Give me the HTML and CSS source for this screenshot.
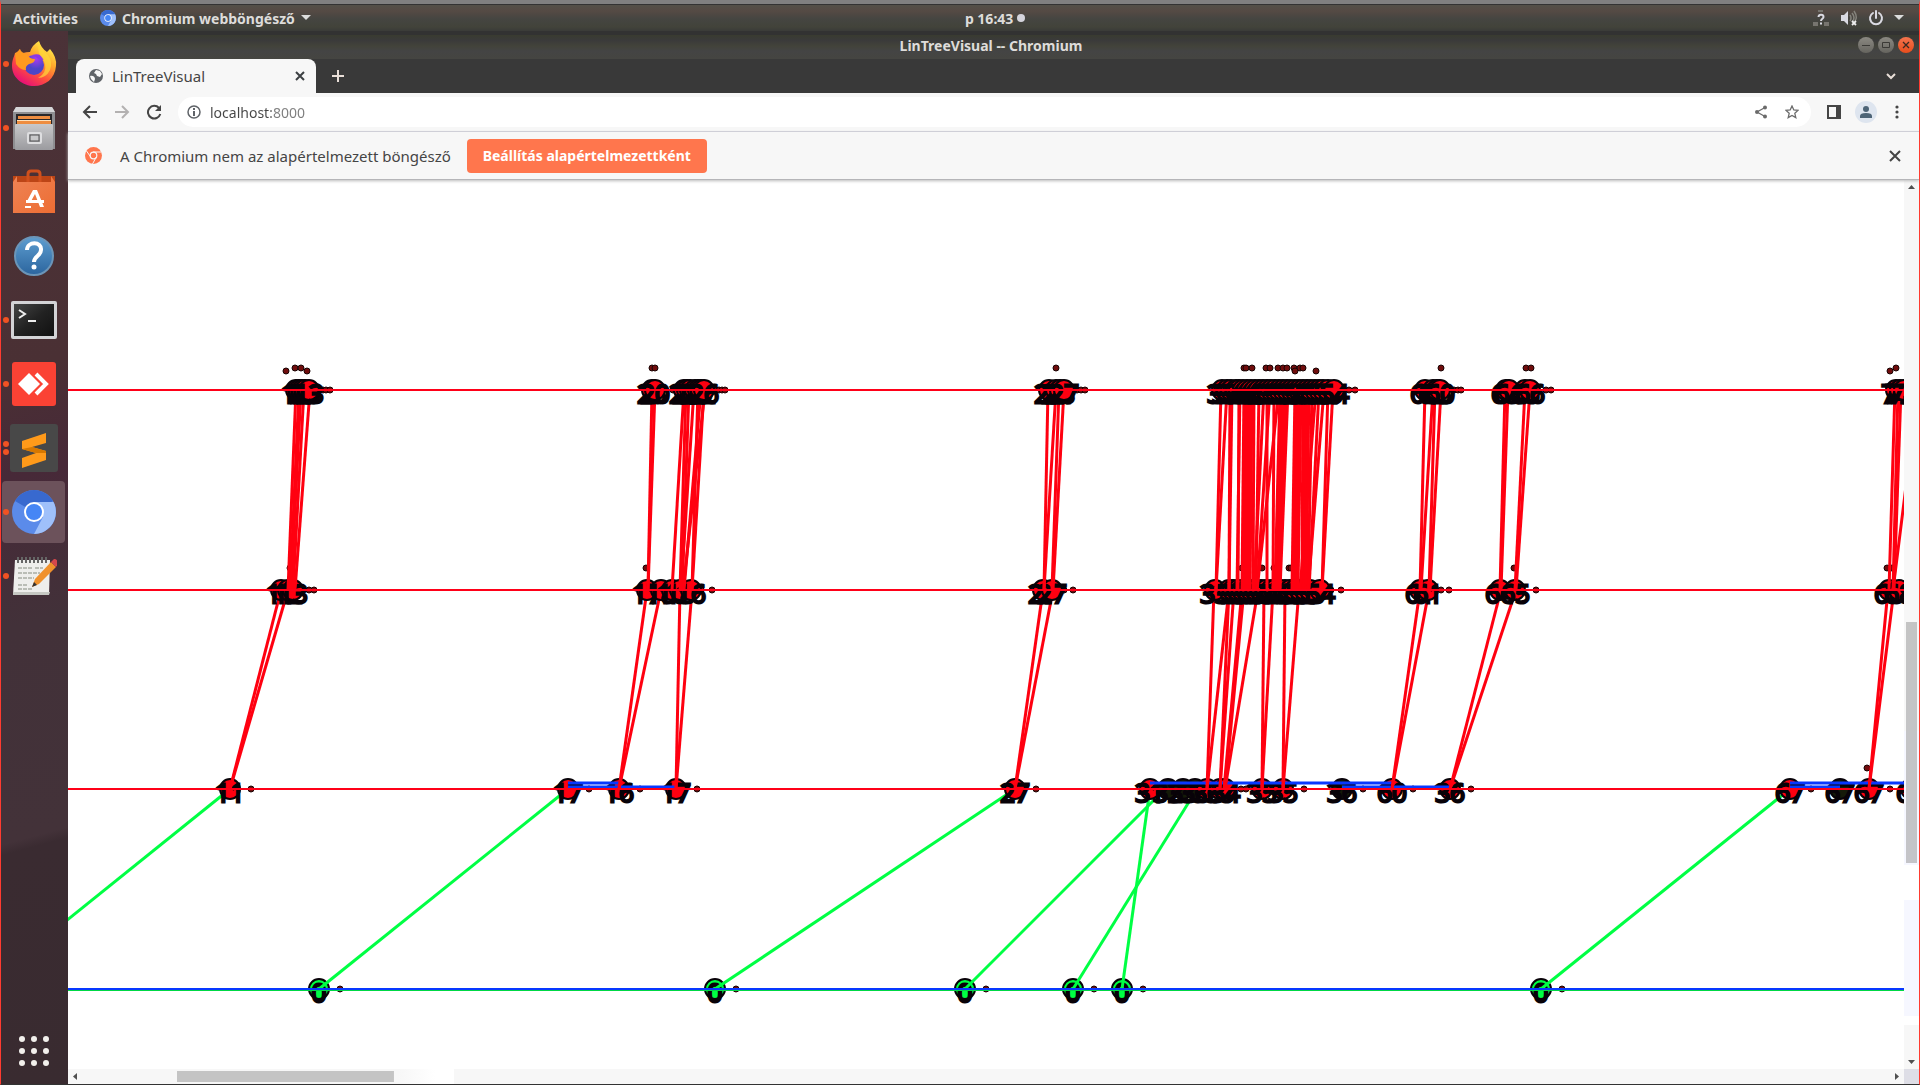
FILE: index.html
```html
<!DOCTYPE html>
<html lang="hu">
<head>
<meta charset="utf-8">
<title>LinTreeVisual</title>
<link rel="stylesheet" href="styles.css">
</head>
<body>
<div class="desktop">
  <header class="topbar">
    <div class="topbar-left">
      <button class="top-item">Activities</button>
      <button class="top-item app-menu">
        <svg width="16" height="16" viewBox="0 0 44 44"><use href="#chromium-logo"/></svg>
        Chromium webböngésző
        <svg width="10" height="6" viewBox="0 0 10 6"><path d="M0 0h10L5 5z" fill="#dcdcdc"/></svg>
      </button>
    </div>
    <button class="top-item clock">p 16:43 <span class="clock-dot"></span></button>
    <div class="topbar-right">
      <svg width="18" height="18" viewBox="0 0 18 18"><path d="M1 13h5v4H1zM12 13h5v4h-5zM6 1h5v2H6z" fill="#77756f"/><path d="M6.500 8c.3-3 5-2.800 5 0 0 1.800-2.500 1.800-2.500 4M9 13.500v2" fill="none" stroke="#dadae2" stroke-width="2"/></svg>
      <svg width="18" height="18" viewBox="0 0 18 18"><path d="M1 6h3l4-4v14l-4-4H1z" fill="#dadae2"/><path d="M10 6q2 3 0 6M12 4q4 5 0 9M14 2q4 6 1 10" fill="none" stroke="#85837c" stroke-width="1.500"/><path d="M12 12l4 4m0-4l-4 4" stroke="#eee" stroke-width="1.800"/></svg>
      <svg width="16" height="16" viewBox="0 0 16 16"><path d="M5 3a6 6 0 1 0 6 0M8 1v7" fill="none" stroke="#dadae2" stroke-width="2" stroke-linecap="round"/></svg>
      <svg width="10" height="6" viewBox="0 0 10 6"><path d="M0 0h10L5 5z" fill="#dcdcdc"/></svg>
    </div>
  </header>
  <div class="workspace">
    <nav class="dock" aria-label="Dock">
      <button class="dock-item run1" aria-label="Firefox">
        <svg width="46" height="46" viewBox="0 0 46 46">
          <defs>
            <linearGradient id="ff-body" x1=".85" y1=".05" x2=".25" y2="1"><stop offset="0" stop-color="#fff44f"/><stop offset=".35" stop-color="#ffa62b"/><stop offset=".65" stop-color="#ff4f3d"/><stop offset="1" stop-color="#e3087e"/></linearGradient>
            <radialGradient id="ff-globe" cx=".6" cy=".2"><stop offset="0" stop-color="#a93af0"/><stop offset="1" stop-color="#4c46c8"/></radialGradient>
          </defs>
          <path d="M4 12q2 0 5-4 0 3 3 4 3-1 7-1 2-7 9-11 2 7 8 11l3-3q7 8 6 17c-1 13-11 20-22 20S1 37 1 25c0-6 2-9 3-13z" fill="url(#ff-body)"/>
          <circle cx="23" cy="24" r="10" fill="url(#ff-globe)"/>
          <path d="M4 12q2 0 5-4 1 4 7 5 2 5 8 5 0 4-6 5-4 2-3 6-6 0-10-6z" fill="#ff9a20"/>
          <path d="M21 14q9-3 12 5-5 0-8-3z" fill="#8d36e8"/>
          <path d="M28 1q2 8 9 13 5 7 2 15-4 8-12 8 9-5 7-14-2-6-5-9-3-5-1-13z" fill="#ffd83a" opacity=".7"/>
        </svg>
      </button>
      <button class="dock-item run1" aria-label="Fájlok">
        <svg width="46" height="46" viewBox="0 0 46 46">
          <defs><linearGradient id="cab" x2="0" y2="1"><stop offset="0" stop-color="#c8c8ca"/><stop offset="1" stop-color="#9b9b9f"/></linearGradient></defs>
          <path d="M5 2h36l3 5v37H2V7z" fill="#8e8e91"/><path d="M5 2h36l3 5H2z" fill="#d6d6d8"/>
          <rect x="5" y="9" width="36" height="11" fill="#29272a"/><path d="M7 11h32v3H7zM6 15h34v4H6z" fill="#ee8d40"/><path d="M6 15h34v1H6z" fill="#ffe2bc"/>
          <rect x="4" y="19" width="38" height="26" rx="1" fill="url(#cab)"/>
          <rect x="17" y="28" width="13" height="10" rx="1" fill="none" stroke="#dedee0" stroke-width="2"/><rect x="19" y="30" width="9" height="6" fill="#c9c9cb" stroke="#505052"/>
        </svg>
      </button>
      <button class="dock-item" aria-label="Szoftverek">
        <svg width="46" height="46" viewBox="0 0 46 46">
          <defs><linearGradient id="bag" x2="1" y2="1"><stop offset="0" stop-color="#ee8355"/><stop offset="1" stop-color="#ed6d33"/></linearGradient></defs>
          <path d="M2 7h42v6H2z" fill="#bc4516"/><path d="M2 13l4-6v6h34V7l4 6v31H2z" fill="url(#bag)"/>
          <path d="M17 13V5q0-3 3-3h6q3 0 3 3v8" fill="none" stroke="#d0501d" stroke-width="3"/>
          <path d="M22 21h4l7 17h-4L24 25l-5 9h-4zM15 31h18v3H15zM14 37h6v2h-6z" fill="#fff"/>
        </svg>
      </button>
      <button class="dock-item" aria-label="Súgó">
        <svg width="46" height="46" viewBox="0 0 46 46">
          <defs><linearGradient id="help" x2="0" y2="1"><stop offset="0" stop-color="#5e9ed0"/><stop offset="1" stop-color="#2b659e"/></linearGradient></defs>
          <circle cx="23" cy="23" r="19" fill="url(#help)" stroke="#6b95b8" stroke-width="2"/>
          <path d="M16 17c0-9 15-9 14 0 0 6-7 6-7 12" fill="none" stroke="#fff" stroke-width="4"/><circle cx="23" cy="34" r="2.500" fill="#fff"/>
        </svg>
      </button>
      <button class="dock-item run1" aria-label="Terminál">
        <svg width="46" height="46" viewBox="0 0 46 46">
          <defs><linearGradient id="term" x2="1" y2="1"><stop offset="0" stop-color="#454545"/><stop offset=".5" stop-color="#222"/><stop offset="1" stop-color="#111"/></linearGradient></defs>
          <rect x="0" y="4" width="46" height="38" rx="2" fill="#d3d3d6"/><rect x="3" y="7" width="40" height="32" fill="url(#term)"/>
          <path d="M8 13l6 4-6 4M17 24h8" fill="none" stroke="#eee" stroke-width="2"/>
        </svg>
      </button>
      <button class="dock-item run1" aria-label="AnyDesk">
        <svg width="46" height="46" viewBox="0 0 46 46"><rect x="1" y="1" width="44" height="44" rx="3" fill="#fb4234"/><path d="M7 23l11-11 11 11-11 11z" fill="#fff"/><path d="M25 13l10 10-10 10" fill="none" stroke="#fff" stroke-width="4"/></svg>
      </button>
      <button class="dock-item run2" aria-label="Sublime Text">
        <svg width="48" height="48" viewBox="0 0 48 48"><rect width="48" height="48" rx="3" fill="#484848"/><path d="M12 17l24-8v10l-14 4 14 4v9l-24 8V34l14-5-14-4z" fill="#ff9a1a"/><path d="M22 23l14 4v2l-10 0-14-4z" fill="#d77800"/></svg>
      </button>
      <button class="dock-item run1 active" aria-label="Chromium">
        <svg width="44" height="44" viewBox="0 0 44 44">
          <g id="chromium-logo"><circle cx="22" cy="22" r="22" fill="#5b8bea"/><path d="M22 22L3 11a22 22 0 0 1 38 0z" fill="#3869cf"/><path d="M22 12h19.500A22 22 0 0 1 22 44l9-17z" fill="#9fc0fa"/><circle cx="22" cy="22" r="10" fill="#fff"/><circle cx="22" cy="22" r="8" fill="#4686f5"/></g>
        </svg>
      </button>
      <button class="dock-item run1" aria-label="Szövegszerkesztő">
        <svg width="46" height="46" viewBox="0 0 46 46">
          <path d="M4 7h35l-1 35H2z" fill="#eeeeec"/><path d="M2 42h36l1-3H2z" fill="#c6c8c3"/>
          <path d="M6 7h30" stroke="#666" stroke-width="6" stroke-dasharray="2 2"/>
          <path d="M7 15h14M24 15h8M7 20h22M7 25h16M7 32h10M7 36h14" stroke="#babdb6" stroke-width="2" stroke-dasharray="4 1"/>
          <path d="M21 34l3-8L40 9l5 5-17 17z" fill="#f0912c"/><path d="M40 9l3-3q4 0 4 5l-2 3z" fill="#d6474c"/><path d="M21 34l2-5 3 3z" fill="#333"/>
        </svg>
      </button>
      <button class="dock-item apps" aria-label="Alkalmazások megjelenítése">
        <svg width="30" height="30" viewBox="0 0 30 30" fill="#f2f0ec"><circle cx="3" cy="3" r="3"/><circle cx="15" cy="3" r="3"/><circle cx="27" cy="3" r="3"/><circle cx="3" cy="15" r="3"/><circle cx="15" cy="15" r="3"/><circle cx="27" cy="15" r="3"/><circle cx="3" cy="27" r="3"/><circle cx="15" cy="27" r="3"/><circle cx="27" cy="27" r="3"/></svg>
      </button>
    </nav>
    <main class="window">
      <div class="titlebar">
        <span class="title">LinTreeVisual -- Chromium</span>
        <div class="window-buttons">
          <button class="wb" aria-label="Kis méret"><svg width="16" height="16" viewBox="0 0 16 16"><path d="M4 8.500h8" stroke="#3b3a36"/></svg></button>
          <button class="wb" aria-label="Teljes méret"><svg width="16" height="16" viewBox="0 0 16 16"><path d="M4.500 5.500h7v5h-7z" fill="none" stroke="#3b3a36"/></svg></button>
          <button class="wb wb-close" aria-label="Bezárás"><svg width="16" height="16" viewBox="0 0 16 16"><path d="M5 5l6 6m0-6l-6 6" stroke="#3b2a22" stroke-width="1.300"/></svg></button>
        </div>
      </div>
      <div class="tabstrip">
        <div class="tab">
          <svg width="16" height="16" viewBox="0 0 16 16"><circle cx="8" cy="8" r="7" fill="#5f6368"/><path d="M2 8c3-1 5 1 5 3l-1 3-3-3zM8 2l-2 3 2 1 1 2 3 1 2-3-2-3z" fill="#f7f7f7"/></svg>
          <span class="tab-title">LinTreeVisual</span>
          <button class="icon-btn" aria-label="Lap bezárása"><svg width="10" height="10" viewBox="0 0 10 10"><path d="M1 1l8 8m0-8L1 9" stroke="#3c4043" stroke-width="2"/></svg></button>
        </div>
        <button class="icon-btn new-tab" aria-label="Új lap"><svg width="12" height="12" viewBox="0 0 12 12"><path d="M6 0v12M0 6h12" stroke="#e9dfd8" stroke-width="2"/></svg></button>
        <button class="icon-btn tab-search" aria-label="Lapok keresése"><svg width="10" height="7" viewBox="0 0 10 7"><path d="M1 1l4 4 4-4" fill="none" stroke="#e9dfd8" stroke-width="2"/></svg></button>
      </div>
      <div class="toolbar">
        <button class="icon-btn" aria-label="Vissza"><svg width="16" height="16" viewBox="0 0 16 16"><path d="M15 8H2m6-6L2 8l6 6" fill="none" stroke="#454545" stroke-width="2"/></svg></button>
        <button class="icon-btn" aria-label="Előre"><svg width="16" height="16" viewBox="0 0 16 16"><path d="M1 8h13M8 2l6 6-6 6" fill="none" stroke="#b3b1b1" stroke-width="2"/></svg></button>
        <button class="icon-btn" aria-label="Újratöltés"><svg width="16" height="16" viewBox="0 0 16 16"><path d="M13 4a6.300 6.300 0 1 0 1.300 6" fill="none" stroke="#454545" stroke-width="2"/><path d="M15 1v6H9z" fill="#454545"/></svg></button>
        <div class="omnibox">
          <svg width="14" height="14" viewBox="0 0 14 14"><circle cx="7" cy="7" r="6" fill="none" stroke="#5f6368" stroke-width="1.500"/><path d="M7 3v2M7 6v5" stroke="#5f6368" stroke-width="2"/></svg>
          <input class="url" type="text" value="localhost:8000" aria-label="Cím">
          <button class="icon-btn" aria-label="Megosztás"><svg width="14" height="14" viewBox="0 0 14 14"><path d="M11 2.500L3 7l8 4.500" fill="none" stroke="#6b6b6b" stroke-width="1.300"/><g fill="#6b6b6b"><circle cx="11" cy="2.500" r="2"/><circle cx="3" cy="7" r="2"/><circle cx="11" cy="11.500" r="2"/></g></svg></button>
          <button class="icon-btn" aria-label="Könyvjelző"><svg width="14" height="14" viewBox="0 0 14 14"><path d="M7 1l1.800 4 4.200.4-3.200 2.900 1 4.300L7 10.400l-3.800 2.200 1-4.300L1 5.400 5.200 5z" fill="none" stroke="#6b6b6b" stroke-width="1.300"/></svg></button>
        </div>
        <button class="icon-btn" aria-label="Oldalsáv"><svg width="14" height="14" viewBox="0 0 14 14"><path d="M0 0h14v14H0zM2 2v10h7V2z" fill="#454545" fill-rule="evenodd"/></svg></button>
        <button class="avatar" aria-label="Profil"><svg width="14" height="14" viewBox="0 0 14 14" fill="#4d6476"><circle cx="7" cy="4" r="3"/><path d="M1 13v-2q0-3 6-3t6 3v2z"/></svg></button>
        <button class="icon-btn menu" aria-label="Menü"><svg width="4" height="14" viewBox="0 0 4 14" fill="#454545"><circle cx="2" cy="2" r="1.600"/><circle cx="2" cy="7" r="1.600"/><circle cx="2" cy="12" r="1.600"/></svg></button>
      </div>
      <div class="infobar">
        <svg width="17" height="17" viewBox="0 0 17 17"><circle cx="8.500" cy="8.500" r="8.500" fill="#ff764d"/><circle cx="8.500" cy="8.500" r="3.300" fill="none" stroke="#f7f7f7" stroke-width="1.200"/><path d="M8 5h8.500M5.700 10L1.500 4M11.300 10l-3.800 7" stroke="#f7f7f7"/></svg>
        <span class="info-text">A Chromium nem az alapértelmezett böngésző</span>
        <button class="default-btn">Beállítás alapértelmezettként</button>
        <button class="icon-btn info-close" aria-label="Bezárás"><svg width="12" height="12" viewBox="0 0 12 12"><path d="M1 1l10 10m0-10L1 11" stroke="#454545" stroke-width="2"/></svg></button>
      </div>
      <div class="page">
        <div class="canvas">
          <svg class="tree" id="tree" viewBox="68 180 1836 889" preserveAspectRatio="xMinYMin slice" role="img" aria-label="LinTree"></svg>
        </div>
        <div class="vbar">
          <svg width="15" height="14" viewBox="0 0 15 14"><path d="M4 9h7L7.500 5z" fill="#505050"/></svg>
          <span class="vthumb"></span>
          <svg width="15" height="14" viewBox="0 0 15 14"><path d="M4 5h7L7.500 9z" fill="#505050"/></svg>
        </div>
        <div class="hbar">
          <svg width="14" height="15" viewBox="0 0 14 15"><path d="M9 4v7L5 7.500z" fill="#505050"/></svg>
          <span class="hthumb"></span>
          <svg width="14" height="15" viewBox="0 0 14 15"><path d="M5 4v7l4-3.500z" fill="#505050"/></svg>
        </div>
        <div class="corner"></div>
      </div>
    </main>
  </div>
</div>
<script src="tree.js"></script>
</body>
</html>
```
FILE: styles.css
```css
* { box-sizing: border-box; }
body {
  margin: 0;
  font-family: "Noto Sans", "Open Sans", sans-serif;
  font-size: 14px;
  color: #454545;
}
button {
  border: 0;
  padding: 0;
  background: none;
  font: inherit;
  color: inherit;
}
svg { display: block; flex: none; }
.desktop {
  height: 100vh;
  display: flex;
  flex-direction: column;
  overflow: hidden;
  border: 1px solid #ff3b30;
  border-top: 4px solid #808080;
  border-bottom: 1px solid #333;
}
.topbar {
  flex: none;
  height: 27px;
  display: grid;
  grid-template-columns: 52fr auto 48fr;
  align-items: center;
  padding: 0 15px 0 12px;
  border-top: 1px solid #333;
  background: linear-gradient(#535048, #554a44 6px, #454541 14px, #42433a 22px, #3a3b38);
  color: #dedcda;
}
.topbar-left, .topbar-right, .top-item { display: flex; align-items: center; }
.topbar-left { gap: 22px; }
.top-item { font-weight: 700; gap: 6px; }
.clock { gap: 4px; }
.clock-dot { width: 8px; height: 8px; border-radius: 50%; background: #d5d4dc; }
.topbar-right { justify-content: flex-end; gap: 10px; }
.workspace { flex: 1; min-height: 0; display: flex; }
.dock {
  flex: none;
  width: 67px;
  display: flex;
  flex-direction: column;
  gap: 2px;
  padding: 2px 3px 2px 1px;
  background: linear-gradient(165deg, #4b3238 0, #4a3034 32%, #472938 42%, #423139 56%, #433239 76%, #3a2b31 77%, #392b30);
}
.dock-item {
  flex: none;
  position: relative;
  height: 62px;
  display: flex;
  align-items: center;
  justify-content: center;
  border-radius: 4px;
}
.dock-item.active { background: #6c525b; }
.run1::before, .run2::before, .run2::after {
  content: "";
  position: absolute;
  left: 1px;
  top: 28px;
  width: 6px;
  height: 6px;
  border-radius: 50%;
  background: #f05223;
}
.run2::before { top: 24px; }
.run2::after { top: 32px; }
.apps { margin-top: auto; }
.window { flex: 1; min-width: 0; display: flex; flex-direction: column; }
.titlebar {
  flex: none;
  height: 28px;
  display: grid;
  grid-template-columns: 1fr auto 1fr;
  align-items: center;
  padding-right: 5px;
  background: linear-gradient(#323232 4px, #393b30 4px, #3a3a3a 9px, #42433a 15px, #444 20px, #454541);
}
.title { grid-column: 2; font-weight: 700; font-variant-ligatures: none; color: #dedcda; }
.window-buttons { display: flex; justify-content: flex-end; gap: 4px; }
.wb {
  width: 16px;
  height: 16px;
  border-radius: 50%;
  background: linear-gradient(#8b8982, #66655f);
}
.wb-close { background: linear-gradient(#f5744e, #e84d1c); }
.tabstrip {
  flex: none;
  height: 34px;
  display: flex;
  align-items: center;
  padding: 0 23px 0 8px;
  background: #393939;
}
.tab {
  width: 240px;
  height: 34px;
  display: flex;
  align-items: center;
  gap: 8px;
  padding: 0 11px 0 12px;
  border-radius: 8px 8px 0 0;
  background: #f7f7f7;
}
.tab-title { flex: 1; font-size: 15px; }
.icon-btn { display: flex; align-items: center; justify-content: center; }
.new-tab { margin-left: 16px; }
.tab-search { margin-left: auto; }
.toolbar {
  flex: none;
  height: 39px;
  display: flex;
  align-items: center;
  gap: 16px;
  padding: 0 20px 0 14px;
  border-bottom: 1px solid #d3d3dc;
  background: #f7f7f7;
}
.omnibox {
  flex: 1;
  height: 30px;
  display: flex;
  align-items: center;
  gap: 9px;
  padding: 0 8px 0 9px;
  border-radius: 15px;
  background: #fff;
}
.omnibox .icon-btn { width: 22px; }
.url {
  flex: 1;
  min-width: 0;
  border: 0;
  padding: 0;
  outline: 0;
  font: inherit;
  color: transparent;
  background: linear-gradient(90deg, #454545 61px, #7d7d7d 61px);
  -webkit-background-clip: text;
  background-clip: text;
}
.avatar {
  width: 22px;
  height: 22px;
  margin: 0 2px 0 -2px;
  display: flex;
  align-items: center;
  justify-content: center;
  border-radius: 50%;
  background: #dee5ef;
}
.infobar {
  flex: none;
  position: relative;
  height: 48px;
  display: flex;
  align-items: center;
  padding: 0 18px 0 17px;
  border-bottom: 1px solid #b5b5b8;
  background: #f7f7f7;
  box-shadow: 0 1px 3px #bbb;
}
.info-text { margin: 0 16px 0 18px; font-size: 15px; }
.default-btn {
  width: 240px;
  height: 34px;
  border-radius: 4px;
  background: #ff764d;
  color: #fff;
  font-size: 14px;
  font-weight: 700;
}
.info-close { margin-left: auto; }
.page {
  flex: 1;
  min-height: 0;
  display: grid;
  grid-template: minmax(0, 1fr) 15px / minmax(0, 1fr) 15px;
  background: #fff;
}
.canvas { overflow: hidden; }
.tree { width: 100%; height: 100%; }
.vbar {
  display: flex;
  flex-direction: column;
  background: linear-gradient(#f7f7f7 62%, #f6f7ff 62% 77%, #fff 77% 81%, #f6f7ff 81% 94%, #fff 94% 95%, #f7f7f7 95%);
}
.hbar { display: flex; background: linear-gradient(90deg, #f7f7f7 18%, #fff 20%, #fff 21%, #f7f7f7 21%); }
.vthumb { flex: 1; margin: 0 2px; background: linear-gradient(#c4c4c4, #c4c4c8) 0 69% / 100% 28% no-repeat; }
.hthumb { flex: 1; margin: 2px 0; background: linear-gradient(#c4c4c4, #c4c4c4) 6% 0 / 12% 100% no-repeat; }
.corner { background: #dedee6; }
.edge { stroke-width: 3; stroke: #ff0010; }
.edge.up { stroke: #00ff44; }
.edge.side { stroke: #0838ff; }
.node { stroke: #080208; stroke-width: 2; fill: #ff0010; }
.node.root { fill: #00ff44; }
.node.idle { fill: #151a08; }
.dot { fill: #700c0c; stroke: #180404; stroke-width: 1; }
.label {
  font-family: "Noto Sans", sans-serif;
  font-size: 26px;
  font-weight: 300;
  text-anchor: middle;
  fill: none;
  stroke: #080208;
  stroke-width: 3;
}
.level { stroke: #ff0018; stroke-width: 2; }
.level.base { stroke: #0838ff; }
.level.shade { stroke: #00d844; }
```
FILE: tree.js
```javascript
const NS = "http://www.w3.org/2000/svg";
const tree = document.getElementById("tree");
const LEVELS = [390, 590, 789, 989];

function add(name, cls, attrs, text) {
  const el = document.createElementNS(NS, name);
  el.setAttribute("class", cls);
  for (const key in attrs) el.setAttribute(key, attrs[key]);
  if (text) el.textContent = text;
  tree.appendChild(el);
}
function edge(cls, x1, y1, x2, y2) {
  add("line", "edge " + cls, { x1, y1, x2, y2 });
}

// Small markers above the nodes: [x, y]
const markers = [
  [286, 371], [295, 368], [301, 368], [307, 371], [652, 368], [655, 368], [1056, 368],
  [1244, 368], [1246, 368], [1252, 368], [1266, 368], [1270, 368], [1278, 368], [1283, 368],
  [1287, 368], [1294, 368], [1300, 368], [1303, 368], [1295, 371], [1316, 371],
  [1441, 368], [1526, 368], [1531, 368], [1890, 371], [1896, 368],
  [290, 568], [646, 568], [1242, 568], [1246, 568], [1262, 568], [1274, 568], [1289, 568],
  [1291, 568], [1514, 568], [1887, 568], [1892, 568], [1867, 768]
];

// Parent links between level 1 and 2: [x on level 1, x on level 2]
const upper = [
  [296, 288], [299, 290], [301, 291], [304, 293], [310, 295],
  [652, 648], [655, 648], [684, 672], [686, 680], [689, 682], [694, 681], [698, 692],
  [701, 684], [704, 692], [705, 683],
  [1048, 1044], [1056, 1044], [1059, 1052], [1064, 1053],
  [1221, 1216], [1227, 1216], [1230, 1229], [1232, 1229], [1239, 1238], [1240, 1237],
  [1244, 1242], [1246, 1244], [1248, 1246], [1250, 1248], [1252, 1250], [1254, 1253], [1259, 1256],
  [1264, 1254], [1267, 1267], [1270, 1257], [1274, 1273], [1279, 1257], [1280, 1275],
  [1282, 1277], [1284, 1278], [1286, 1279], [1288, 1280], [1295, 1292], [1297, 1294], [1299, 1296],
  [1301, 1298], [1303, 1302], [1305, 1303], [1307, 1304], [1309, 1306], [1312, 1308], [1316, 1300],
  [1319, 1309], [1324, 1308], [1328, 1322], [1333, 1322],
  [1425, 1420], [1433, 1421], [1435, 1429], [1441, 1430],
  [1505, 1500], [1508, 1501], [1525, 1515], [1530, 1516],
  [1895, 1889], [1898, 1893], [1901, 1894], [1918, 1893]
];

// Parent links between level 2 and 3
const lower = [
  [281, 230], [288, 230], [647, 619], [661, 619], [680, 676], [692, 676],
  [1043, 1015], [1053, 1015], [1214, 1207], [1229, 1207], [1229, 1220], [1234, 1220],
  [1242, 1224], [1244, 1225], [1258, 1225], [1264, 1262], [1273, 1262], [1285, 1283],
  [1299, 1283], [1420, 1392], [1429, 1392], [1501, 1450], [1516, 1450], [1888, 1869], [1894, 1869]
];

// Links from the base level up to level 3
const base = [
  [30, 230], [319, 568], [715, 1015], [965, 1165], [1073, 1197], [1122, 1150], [1541, 1790]
];

// Same-level links: [from, to, y]
const side = [
  [568, 619, 783], [568, 676, 787], [1150, 1392, 783], [1342, 1450, 787],
  [1790, 1910, 783], [1790, 1840, 787]
];

// Nodes of each level: [x, label]
const rows = [
  [[296, "12"], [299, "11"], [302, "13"], [305, "15"], [309, "13"],
   [652, "23"], [655, "20"], [684, "21"], [687, "28"], [690, "17"], [695, "26"], [698, "19"], [701, "22"], [704, "26"],
   [1049, "27"], [1056, "29"], [1060, "28"], [1064, "27"],
   [1222, "31"], [1227, "33"], [1231, "35"], [1236, "36"], [1239, "38"], [1243, "40"], [1247, "42"], [1251, "43"], [1255, "45"],
   [1259, "46"], [1263, "48"], [1267, "50"], [1271, "36"], [1275, "38"], [1279, "53"], [1283, "52"], [1287, "55"], [1291, "56"],
   [1295, "39"], [1299, "58"], [1303, "50"], [1307, "49"], [1311, "52"], [1315, "58"], [1319, "53"], [1323, "52"], [1328, "55"], [1334, "54"],
   [1425, "61"], [1433, "62"], [1437, "63"], [1440, "60"], [1506, "63"], [1509, "64"], [1525, "65"], [1530, "66"],
   [1896, "71"], [1900, "72"], [1904, "74"]],
  [[281, "11"], [288, "12"], [293, "13"], [647, "17"], [661, "18"], [672, "16"], [680, "18"], [691, "16"],
   [1043, "27"], [1052, "27"], [1215, "31"], [1229, "38"], [1233, "35"], [1238, "36"], [1242, "36"], [1247, "38"], [1251, "35"],
   [1256, "36"], [1261, "38"], [1266, "39"], [1271, "40"], [1275, "38"], [1280, "43"], [1285, "44"], [1290, "48"], [1295, "50"],
   [1300, "52"], [1305, "58"], [1310, "53"], [1320, "54"],
   [1420, "61"], [1428, "61"], [1500, "64"], [1515, "65"], [1889, "68"], [1899, "68"]],
  [[230, "11"], [568, "17"], [619, "16"], [676, "17"], [1015, "27"],
   [1150, "31"], [1168, "32", "idle"], [1183, "33", "idle"], [1195, "36", "idle"], [1207, "36"], [1220, "35"], [1225, "34"],
   [1262, "35"], [1283, "35"], [1342, "36", "idle"], [1392, "60"], [1450, "36"],
   [1790, "67"], [1840, "67", "idle"], [1869, "67"], [1911, "67"]],
  [[319, "0"], [715, "0"], [965, "0"], [1073, "0"], [1122, "0"], [1541, "0"]]
];

function drawRow(i) {
  const y = LEVELS[i];
  for (const [x, text, state] of rows[i]) {
    add("circle", "dot", { cx: x + 21, cy: y, r: 3 });
    add("circle", "node " + (state || (i === 3 ? "root" : "")), { cx: x, cy: y, r: 10 });
    add("text", "label", { x, y: y + 13 }, text);
  }
}

// Painted from the base upwards, so each link covers the node below it
for (const [cx, cy] of markers) add("circle", "dot", { cx, cy, r: 3 });
drawRow(3);
for (const [a, b] of base) edge("up", a, a === 30 ? 950 : LEVELS[3], b, LEVELS[2]);
drawRow(2);
for (const [a, b, y] of side) edge("side", a, y, b, y);
for (const [a, b] of lower) edge("", a, LEVELS[1], b, LEVELS[2]);
drawRow(1);
for (const [a, b] of upper) edge("", a, LEVELS[0], b, LEVELS[1]);
drawRow(0);

// Level lines run over the nodes
LEVELS.forEach((y, i) => {
  if (i === 3) add("line", "level shade", { x1: 0, y1: y + 1, x2: 4000, y2: y + 1 });
  add("line", "level " + (i === 3 ? "base" : ""), { x1: 0, y1: y, x2: 4000, y2: y });
});
```
